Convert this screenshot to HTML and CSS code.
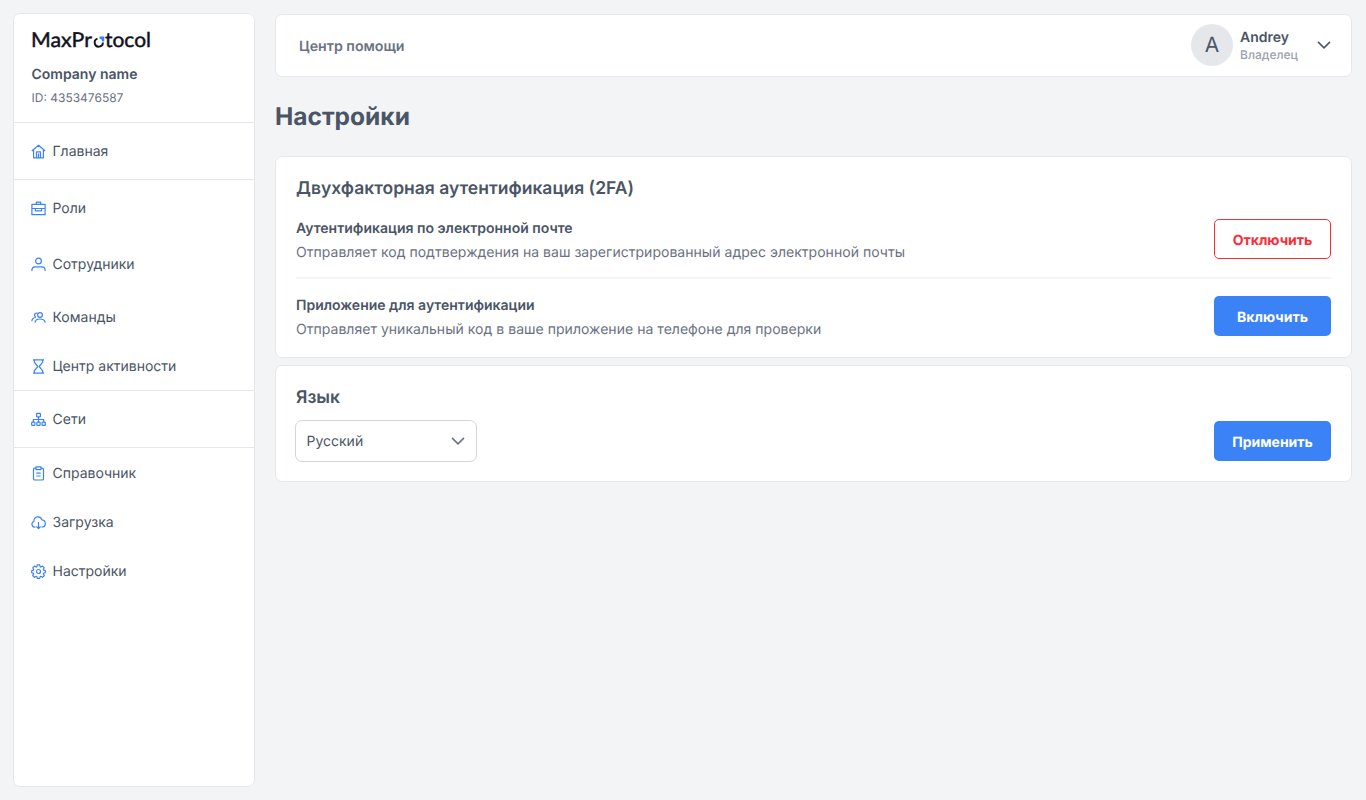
FILE: index.html
```html
<!doctype html>
<html lang="ru">
<head>
    <meta charset="UTF-8">
    <title>Настройки</title>
    <link rel="stylesheet" href="styles.css">
</head>
<body>
    <aside class="sidebar">
        <div class="company">
            <svg class="logo" width="124" height="26" viewBox="0 0 124 26">
                <text x="-1" y="18" textLength="61" lengthAdjust="spacingAndGlyphs">MaxPr</text>
                <path class="logo-ring" d="M65.500 9.700a4.100 4.100 0 1 0 5.400 3.900"/>
                <path class="logo-mark" d="M67.500 7.500h4.800v4.900h-1.900a3.500 3.500 0 0 0-2.900-2.900z"/>
                <text x="73" y="18" textLength="46" lengthAdjust="spacingAndGlyphs">tocol</text>
            </svg>
            <div class="company-name">Company name</div>
            <div class="company-id">ID: 4353476587</div>
        </div>

        <nav>
            <div class="group">
                <a class="item tall">
                    <svg class="icon" viewBox="0 0 15 15"><path d="M.8 7 7.5 1.2 14.2 7M2.6 5.8v8h9.8v-8M5.5 13.8V7.9h4v5.9M7.5 9.6v4.2"/></svg>
                    Главная
                </a>
            </div>
            <div class="group">
                <a class="item tall">
                    <svg class="icon" viewBox="0 0 15 15"><path d="M.9 3.3h13.2v10.4H.9zM5.3 3.3V1.1h4.4v2.2M.9 7.5h13.2M4.4 7.5v2.3h6.2V7.5"/></svg>
                    Роли
                </a>
                <a class="item tall">
                    <svg class="icon" viewBox="0 0 15 15"><circle cx="7.5" cy="4" r="2.9"/><path d="M.9 14v-.8c0-2 1.4-3.3 3.4-3.3h6.4c2 0 3.400 1.300 3.400 3.300v.8"/></svg>
                    Сотрудники
                </a>
                <a class="item">
                    <svg class="icon" viewBox="0 0 15 15"><circle cx="9" cy="5" r="2.4"/><path d="M4 12.600c.2-2.400 2-3.600 4.900-3.600s5 1.200 5.300 3.600M6.300 3.200a2 2 0 1 0-1.400 3.900M.8 11.200C1 9 2.300 7.800 4.700 7.500"/></svg>
                    Команды
                </a>
                <a class="item">
                    <svg class="icon" viewBox="0 0 15 15"><path d="M2 .9h11M2 14.100h11M3.300.9v2.300l3.500 4.300-3.500 4.300v2.300M11.700.9v2.300L8.200 7.500l3.500 4.300v2.300"/></svg>
                    Центр активности
                </a>
            </div>
            <div class="group">
                <a class="item tall">
                    <svg class="icon" viewBox="0 0 15 15"><rect x="5.6" y="1.3" width="3.8" height="3.6" rx=".6"/><rect x=".7" y="10.1" width="3.2" height="3.2" rx=".6"/><rect x="5.9" y="10.1" width="3.2" height="3.2" rx=".6"/><rect x="11.1" y="10.1" width="3.2" height="3.2" rx=".6"/><path d="M7.5 4.900v5.200M2.300 10.100V7.500h10.400v2.600"/></svg>
                    Сети
                </a>
            </div>
            <div class="group">
                <a class="item">
                    <svg class="icon" viewBox="0 0 15 15"><path d="M5 2.200H3.800c-.8 0-1.300.5-1.300 1.300v9.200c0 .8.5 1.300 1.300 1.300h7.400c.8 0 1.300-.5 1.300-1.300V3.500c0-.8-.5-1.300-1.300-1.300H10M5 .9h5v2.700H5zM5.300 7.200h4.400M5.300 10h4.400"/></svg>
                    Справочник
                </a>
                <a class="item">
                    <svg class="icon" viewBox="0 0 15 15"><path d="M4.400 12.200H3.700a3 3 0 0 1-.8-5.800C2.700 3.700 4.500 1.900 6.900 1.900c2 0 3.500 1.100 4.100 3 2 .2 3.300 1.600 3.300 3.600 0 2.200-1.500 3.700-3.700 3.700M7.500 6.900v6.600M5.400 11.500l2.100 2.100 2.100-2.100"/></svg>
                    Загрузка
                </a>
                <a class="item">
                    <svg class="icon" viewBox="0 0 15 15"><circle cx="7.5" cy="7.5" r="2"/><path d="M6.300.9h2.400l.5 1.900.7.300 1.700-1 1.700 1.700-1 1.700.3.700 1.700.5v1.900l-1.700.6-.3.700 1 1.700-1.700 1.700-1.700-1-.7.300-.5 1.800H6.300l-.5-1.800-.7-.3-1.700 1-1.700-1.700 1-1.700-.3-.7-1.700-.6V6.700l1.700-.5.300-.7-1-1.700 1.700-1.700 1.700 1 .7-.3z"/></svg>
                    Настройки
                </a>
            </div>
        </nav>
    </aside>

    <main class="main">
        <header class="header">
            <a class="help">Центр помощи</a>
            <div class="user">
                <div class="avatar">A</div>
                <div class="user-info">
                    <div class="user-name">Andrey</div>
                    <div class="user-role">Владелец</div>
                </div>
                <svg class="chevron" width="14" height="8" viewBox="0 0 14 8"><path d="M1 .9l6 6 6-6"/></svg>
            </div>
        </header>

        <h1 class="title">Настройки</h1>

        <section class="card">
            <h2 class="card-title">Двухфакторная аутентификация (2FA)</h2>
            <div class="row">
                <div class="row-info">
                    <div class="row-title">Аутентификация по электронной почте</div>
                    <div class="row-text">Отправляет код подтверждения на ваш зарегистрированный адрес электронной почты</div>
                </div>
                <button class="btn btn-danger">Отключить</button>
            </div>
            <div class="line"></div>
            <div class="row">
                <div class="row-info">
                    <div class="row-title">Приложение для аутентификации</div>
                    <div class="row-text">Отправляет уникальный код в ваше приложение на телефоне для проверки</div>
                </div>
                <button class="btn">Включить</button>
            </div>
        </section>

        <section class="card card-lang">
            <h2 class="card-title">Язык</h2>
            <div class="row">
                <div class="select">
                    Русский
                    <svg class="chevron" width="14" height="8" viewBox="0 0 14 8"><path d="M1 .9l6 6 6-6"/></svg>
                </div>
                <button class="btn">Применить</button>
            </div>
        </section>
    </main>
</body>
</html>
```
FILE: styles.css
```css
* {
    box-sizing: border-box;
}
body {
    display: flex;
    gap: 20px;
    height: 800px;
    margin: 0;
    padding: 13px 14px 13px 13px;
    background: #f3f4f6;
    color: #4a5565;
    font-family: 'Inter', sans-serif;
    font-size: 14px;
    text-rendering: geometricPrecision;
}
.sidebar {
    width: 242px;
    background: #fff;
    border: 1px solid #e5e7eb;
    border-radius: 7px;
}
.company {
    height: 109px;
    padding: 15px 17px 0 17.5px;
    border-bottom: 1px solid #e5e7eb;
}
.logo {
    display: block;
    overflow: visible;
    fill: #12121f;
    font-family: 'Lato', sans-serif;
    font-size: 20.5px;
}
.logo text {
    stroke: #12121f;
    stroke-width: .45;
}
.logo-ring {
    fill: none;
    stroke: #12121f;
    stroke-width: 1.9;
}
.logo-mark {
    fill: #3b82f6;
}
.company-name {
    margin-top: 10px;
    line-height: 20px;
    font-weight: 600;
}
.company-id {
    margin-top: 5px;
    line-height: 16px;
    font-size: 12px;
    color: #6a7282;
}
.group {
    border-bottom: 1px solid #e5e7eb;
}
.group:last-child {
    border-bottom: 0;
}
.item {
    display: flex;
    align-items: center;
    gap: 6.5px;
    height: 49px;
    padding: 1px 0 0 17px;
}
.item.tall {
    height: 56px;
    padding-top: 0;
}
.icon {
    width: 15px;
    height: 15px;
    fill: none;
    stroke: #3b82f6;
    stroke-width: 1.2;
    stroke-linejoin: round;
}
.main {
    flex: 1;
    padding-top: 1px;
}
.header {
    display: flex;
    align-items: center;
    justify-content: space-between;
    height: 63px;
    padding: 0 20px 0 23px;
    background: #fff;
    border: 1px solid #e5e7eb;
    border-radius: 7px;
}
.help {
    padding-top: 1px;
    font-size: 14.2px;
    font-weight: 600;
    color: #6a7282;
}
.user {
    display: flex;
    align-items: center;
    margin-top: -1px;
}
.avatar {
    width: 42px;
    height: 42px;
    margin-right: 7px;
    border-radius: 50%;
    background: #e5e7eb;
    font-size: 21px;
    line-height: 44px;
    text-align: center;
}
.user-info {
    width: 77px;
    padding-top: 2px;
}
.user-name {
    font-weight: 600;
    line-height: 18px;
}
.user-role {
    font-size: 12px;
    font-weight: 500;
    line-height: 16px;
    color: #99a1af;
}
.chevron {
    fill: none;
    stroke: #4a5565;
    stroke-width: 1.5;
}
.title {
    margin: 24px 0 23px;
    font-size: 24.5px;
    font-weight: 700;
    line-height: 31px;
    padding-bottom: 1px;
}
.card {
    height: 202px;
    padding: 18px 20px;
    background: #fff;
    border: 1px solid #e5e7eb;
    border-radius: 7px;
}
.card-title {
    margin: 0 0 15px;
    font-size: 17.5px;
    font-weight: 600;
    line-height: 28px;
}
.row {
    display: flex;
    align-items: center;
    justify-content: space-between;
    height: 42px;
}
.row-info {
    padding-top: 4px;
}
.row-title {
    font-weight: 600;
    line-height: 20px;
}
.row-text {
    margin-top: 4px;
    line-height: 20px;
    letter-spacing: .03px;
    color: #6a7282;
}
.line {
    height: 2px;
    margin: 17px 0 16px;
    background: #f3f4f6;
}
.btn {
    width: 117px;
    height: 40px;
    padding: 2px 0 0;
    border: 0;
    border-radius: 5px;
    background: #3b82f6;
    color: #fff;
    font-family: inherit;
    font-size: 14px;
    font-weight: 700;
    text-rendering: inherit;
}
.btn-danger {
    border: 1px solid #fb2c36;
    background: #fff;
    color: #fb2c36;
}
.card-lang {
    height: 117px;
    margin-top: 7px;
}
.card-lang .card-title {
    margin-bottom: 8px;
}
.select {
    display: flex;
    align-items: center;
    justify-content: space-between;
    width: 182px;
    height: 42px;
    margin-left: -1px;
    padding: 0 11px 0 10.5px;
    border: 1px solid #d1d5dc;
    border-radius: 7px;
}
.select .chevron {
    stroke: #6a7282;
}
```
